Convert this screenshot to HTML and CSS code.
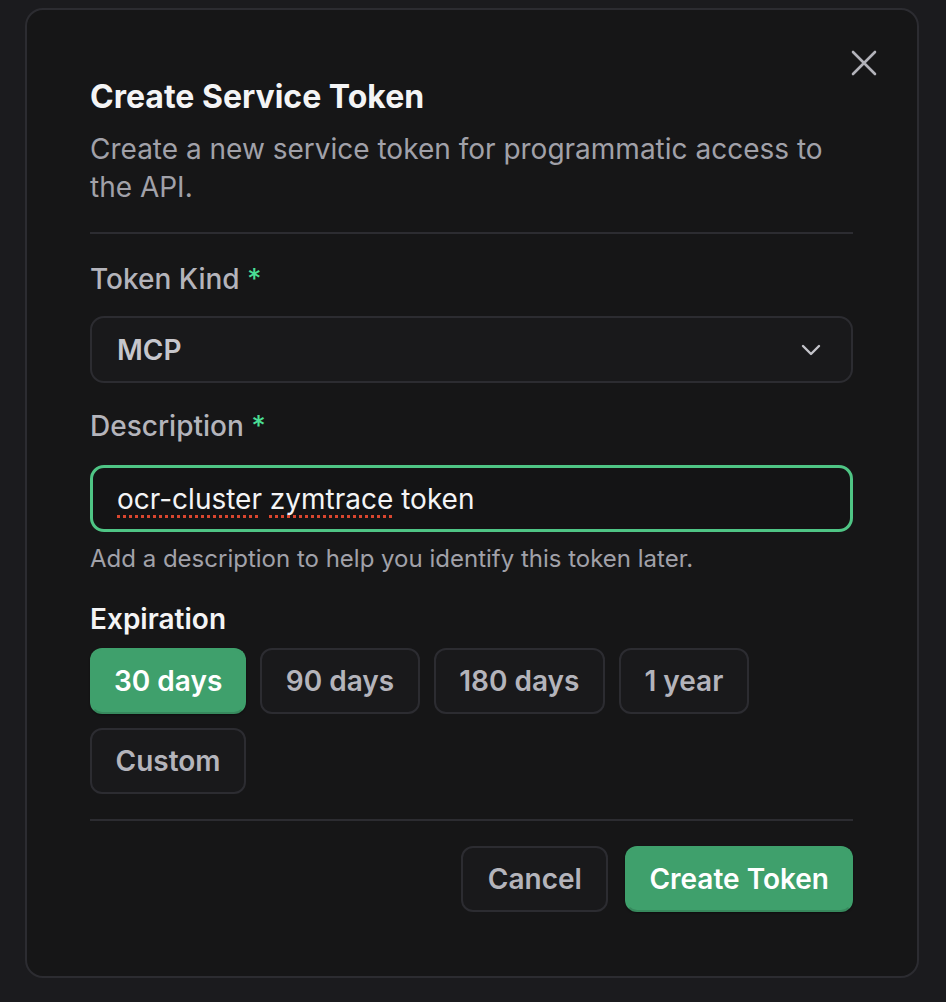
FILE: index.html
```html
<!DOCTYPE html>
<html>
<head>
<meta charset="utf-8">
<link rel="stylesheet" href="styles.css">
</head>
<body>
<div class="modal">
  <button class="close" aria-label="Close">
    <svg width="28" height="28" viewBox="0 0 28 28"><path d="M3 3 L25 25 M25 3 L3 25" stroke="#b3b3ba" stroke-width="2.6" stroke-linecap="round" fill="none"/></svg>
  </button>
  <h1 class="title">Create Service Token</h1>
  <p class="subtitle">Create a new service token for programmatic access to the API.</p>
  <hr class="divider top-divider">
  <div class="label">Token Kind <span class="req">*</span></div>
  <div class="select">
    <span class="select-value">MCP</span>
    <svg width="20" height="12" viewBox="0 0 20 12"><path d="M2 2 L10 10 L18 2" stroke="#c4c4ca" stroke-width="2.4" stroke-linecap="round" stroke-linejoin="round" fill="none"/></svg>
  </div>
  <div class="label label-desc">Description <span class="req">*</span></div>
  <div class="input"><span class="input-text"><span class="spell">ocr-cluster</span> <span class="spell">zymtrace</span> token</span></div>
  <div class="help">Add a description to help you identify this token later.</div>
  <div class="section-title">Expiration</div>
  <div class="chips">
    <button class="chip active">30 days</button>
    <button class="chip">90 days</button>
    <button class="chip">180 days</button>
    <button class="chip">1 year</button>
    <button class="chip">Custom</button>
  </div>
  <hr class="divider bottom-divider">
  <div class="footer">
    <button class="btn btn-secondary">Cancel</button>
    <button class="btn btn-primary">Create Token</button>
  </div>
</div>
</body>
</html>
```
FILE: styles.css
```css
* { box-sizing: border-box; }
html, body { margin: 0; padding: 0; }
body {
  background: #1b1b1e;
  font-family: Inter, "Noto Sans", sans-serif;
  width: 946px;
  height: 1002px;
  overflow: hidden;
}
.modal {
  position: relative;
  margin: 8px 0 0 25px;
  width: 894px;
  height: 970px;
  background: #161617;
  border: 2px solid #2c2c31;
  border-radius: 18px;
  padding: 68px 64px 0 63px;
}
.close {
  position: absolute;
  top: 39px;
  right: 39px;
  width: 28px;
  height: 28px;
  padding: 0;
  border: 0;
  background: transparent;
}
.close svg { display: block; }
.title {
  margin: 0;
  font-size: 32px;
  line-height: 38px;
  font-weight: 700;
  color: #f4f4f5;
}
.subtitle {
  margin: 14px 0 0;
  font-size: 28px;
  line-height: 38px;
  color: #a1a1a9;
  font-weight: 400;
}
.divider {
  border: 0;
  height: 2px;
  background: #2c2c31;
  margin: 0;
}
.top-divider { margin-top: 26px; }
.label {
  margin-top: 26px;
  font-size: 28px;
  line-height: 38px;
  font-weight: 500;
  color: #b4b4bb;
}
.req { color: #4ade94; }
.label-desc { margin-top: 24px; }
.select {
  margin-top: 18px;
  height: 67px;
  border: 2px solid #2c2c31;
  border-radius: 14px;
  background: #19191b;
  display: flex;
  align-items: center;
  justify-content: space-between;
  padding: 0 30px 0 25px;
}
.select-value {
  font-size: 28px;
  font-weight: 600;
  color: #c6c6cc;
}
.input {
  margin-top: 20px;
  height: 67px;
  border: 3px solid #4fc585;
  border-radius: 14px;
  background: #141415;
  display: flex;
  align-items: center;
  padding: 0 24px;
  font-size: 28px;
  color: #f4f4f5;
}
.input-text { white-space: pre; }
.spell {
  text-decoration: underline dotted #d9462f;
  text-decoration-thickness: 3px;
  text-underline-offset: 6px;
}
.help {
  margin-top: 11px;
  font-size: 24px;
  line-height: 32px;
  color: #a1a1a9;
}
.section-title {
  margin-top: 25px;
  font-size: 28px;
  line-height: 38px;
  font-weight: 600;
  color: #f4f4f5;
}
.chips {
  margin-top: 10px;
  display: flex;
  flex-wrap: wrap;
  gap: 14px;
  width: 680px;
}
.chip, .btn {
  height: 66px;
  padding: 0 23.5px;
  border-radius: 12px;
  border: 2px solid #2c2c31;
  background: #19191b;
  font-family: Inter, "Noto Sans", sans-serif;
  font-size: 28px;
  font-weight: 600;
  color: #b4b4bb;
}
.chip.active {
  padding: 0 22px;
}
.chip.active, .btn-primary {
  background: #3fa06c;
  border-color: #3fa06c;
  border-bottom-color: #37895d;
  color: #ffffff;
  box-shadow: 0 1px 2px rgba(0,0,0,0.4);
}
.bottom-divider { margin-top: 25px; }
.footer {
  margin-top: 25px;
  display: flex;
  justify-content: flex-end;
  gap: 17px;
}
.btn-secondary { padding: 0 24.5px; }
.btn-primary { padding: 0 22px; }
```
